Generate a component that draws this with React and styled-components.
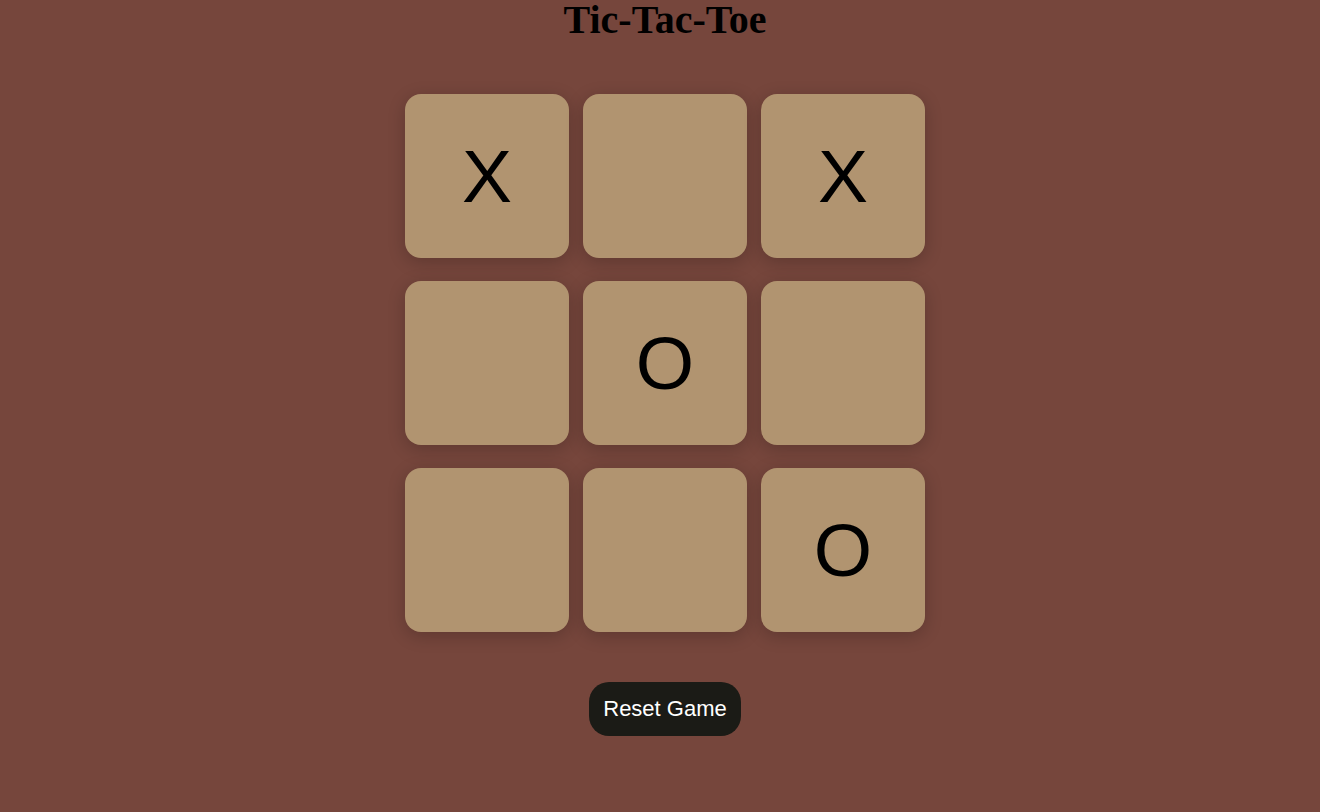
import React, { useState } from "react";
import styled, { createGlobalStyle } from "styled-components";

const Global = createGlobalStyle`
  html, body { margin: 0; padding: 0; }
  body {
    background: #76463c;
    font-family: "Liberation Serif", "Times New Roman", serif;
  }
`;

const Page = styled.div`
  display: flex;
  flex-direction: column;
  align-items: center;
  padding-left: 10px;
  min-height: 812px;
  box-sizing: border-box;
`;

const Title = styled.h1`
  margin: 0;
  font-family: "Liberation Serif", "Times New Roman", serif;
  font-weight: bold;
  font-size: 40px;
  line-height: 40px;
  color: #000;
`;

const Board = styled.div`
  display: grid;
  grid-template-columns: repeat(3, 164px);
  grid-auto-rows: 164px;
  column-gap: 14px;
  row-gap: 23px;
  margin-top: 54px;
`;

const Cell = styled.button`
  display: flex;
  align-items: center;
  justify-content: center;
  border: none;
  padding: 0;
  background: #b19470;
  border-radius: 16px;
  box-shadow: 0 4px 18px rgba(0, 0, 0, 0.2);
  font-family: "Liberation Sans", Arial, sans-serif;
  font-size: 75px;
  color: #000;
  cursor: pointer;
`;

const ResetButton = styled.button`
  margin-top: 50px;
  height: 54px;
  padding: 0 14px;
  border: none;
  border-radius: 20px;
  background: #1b1b16;
  color: #fff;
  font-family: "Liberation Sans", Arial, sans-serif;
  font-size: 22px;
  cursor: pointer;
`;

const initial = ["X", "", "X", "", "O", "", "", "", "O"];

export default function App() {
  const [cells, setCells] = useState(initial);
  return (
    <>
      <Global />
      <Page>
        <Title>Tic-Tac-Toe</Title>
        <Board>
          {cells.map((v, i) => (
            <Cell key={i}>{v}</Cell>
          ))}
        </Board>
        <ResetButton onClick={() => setCells(Array(9).fill(""))}>Reset Game</ResetButton>
      </Page>
    </>
  );
}
